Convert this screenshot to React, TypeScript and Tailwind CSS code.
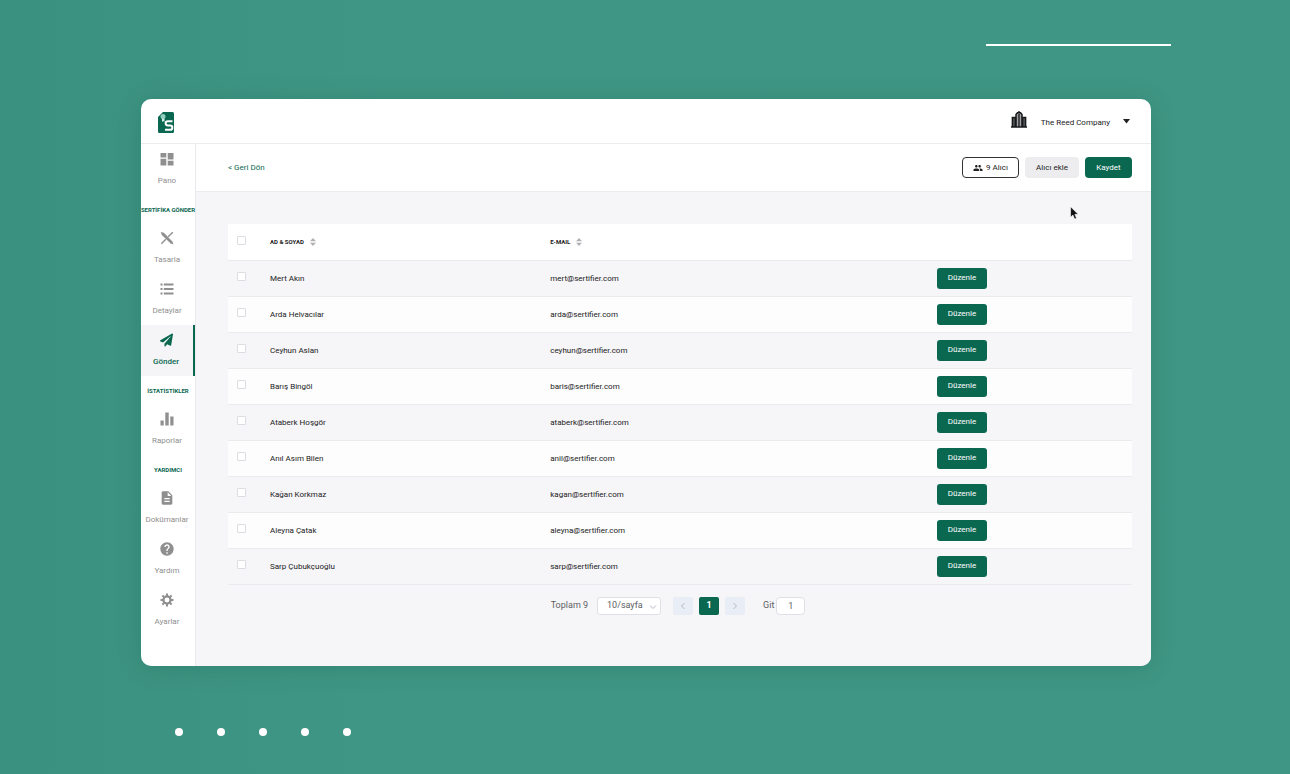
import React from 'react';
import { MdDescription, MdGroup, MdHelp } from 'react-icons/md';
import { FaPaperPlane } from 'react-icons/fa';

interface Recipient {
  name: string;
  email: string;
}

interface NavItemProps {
  label: string;
  icon: React.ReactNode;
  active?: boolean;
}

const recipients: Recipient[] = [
  { name: 'Mert Akın', email: 'mert@sertifier.com' },
  { name: 'Arda Helvacılar', email: 'arda@sertifier.com' },
  { name: 'Ceyhun Aslan', email: 'ceyhun@sertifier.com' },
  { name: 'Barış Bingöl', email: 'baris@sertifier.com' },
  { name: 'Ataberk Hoşgör', email: 'ataberk@sertifier.com' },
  { name: 'Anıl Asım Bilen', email: 'anil@sertifier.com' },
  { name: 'Kağan Korkmaz', email: 'kagan@sertifier.com' },
  { name: 'Aleyna Çatak', email: 'aleyna@sertifier.com' },
  { name: 'Sarp Çubukçuoğlu', email: 'sarp@sertifier.com' },
];

const Logo = () => (
  <svg className="w-4 h-[21px]" viewBox="0 0 16 21" fill="none">
    <path d="M5 0h9.500a1.500 1.500 0 011.500 1.500v18a1.500 1.500 0 01-1.500 1.500h-13a1.500 1.500 0 01-1.500-1.500V5z" fill="#0b6850" />
    <circle cx="5" cy="4.600" r="2.500" fill="#8fd0bf" />
    <path d="M4 6.500v3.500l1.300-1 1.200 1V6.500z" fill="#d5efe8" />
    <path d="M14.500 9.200H9.800a1.900 1.900 0 000 4.300h2.400a2 2 0 010 4.300H7" stroke="#fff" strokeWidth="2" />
  </svg>
);

const DashboardIcon = () => (
  <svg className="w-4 h-4" viewBox="0 0 16 16" fill="currentColor">
    <path d="M1.500 2H7.300v4.500H1.500zM8.700 2h5.800v6.500H8.700zM1.500 7.800h5.800v6.700H1.500zM8.700 9.800h5.800v4.700H8.700z" />
  </svg>
);

const DesignIcon = () => (
  <svg className="w-4 h-4" viewBox="0 0 16 16" fill="none" stroke="currentColor">
    <path d="M2 2l3 .9 8.500 8.900.7 2.400-2.400-.7L2.900 5z" fill="currentColor" strokeWidth=".2" />
    <path d="M13.800 2.200L9.200 6.800M6.800 9.200L2.300 13.700" strokeWidth="1.400" />
  </svg>
);

const ListIcon = () => (
  <svg className="w-4 h-4" viewBox="0 0 16 16" fill="currentColor">
    <path d="M1.500 2.500h2v2h-2zM1.500 7h2v2h-2zM1.500 11.500h2v2h-2zM4.800 2.500h9.700v2H4.800zM4.800 7h9.700v2H4.800zM4.800 11.500h9.700v2H4.800z" />
  </svg>
);

const ChartIcon = () => (
  <svg className="w-4 h-4" viewBox="0 0 16 16" fill="currentColor">
    <path d="M1.500 9.500h3.200v5H1.500zM6.300 1.500h3.400v13H6.300zM11.300 5.500h3.200v9h-3.200z" />
  </svg>
);

const GearIcon = () => (
  <svg className="w-4 h-4" viewBox="0 0 16 16" fill="none" stroke="currentColor">
    <circle cx="8" cy="8" r="3.600" strokeWidth="2.300" />
    <path
      d="M8 1.500v2.500M8 12v2.500M1.500 8H4M12 8h2.500M3.400 3.400l1.800 1.800M10.800 10.800l1.800 1.800M3.400 12.600l1.800-1.800M10.800 5.200l1.800-1.800"
      strokeWidth="2"
    />
  </svg>
);

const BuildingIcon = () => (
  <svg className="w-4 h-[17px]" viewBox="0 0 16 17" fill="none" stroke="#16181a">
    <path d="M5 16V3.500L6.500 1.800h3L11 3.500V16" fill="#a0a3a5" strokeWidth="1.500" />
    <path d="M1.400 16V6.500h3V16M11.600 16V6.500h3V16" fill="#55585a" strokeWidth="1.500" />
    <path d="M8 3v13" strokeWidth="1.300" />
    <path d="M0 16h16M8 0v2" strokeWidth="1.400" />
  </svg>
);

const SortIcon = () => (
  <svg className="w-[6px] h-2" viewBox="0 0 6 8" fill="#b0b0b5">
    <path d="M3 0l3 3.300H0zM3 8L0 4.700h6z" />
  </svg>
);

const Chevron = ({ path }: { path: string }) => (
  <svg className="w-2 h-2" viewBox="0 0 8 8" fill="none" stroke="#b3b8c2">
    <path d={path} />
  </svg>
);

const NavItem: React.FC<NavItemProps> = ({ label, icon, active }) => (
  <a
    href="#"
    className={`flex flex-col items-center h-[51px] pt-[7px] gap-2 text-[8px] leading-3 ${
      active ? 'bg-[#f5f5f7] text-[#0b6850] font-medium border-r-2 border-[#0b6850] pr-[2px]' : 'text-[#8f8f8f] pr-[2px]'
    }`}
  >
    {icon}
    <span>{label}</span>
  </a>
);

const NavTitle = ({ children }: { children: React.ReactNode }) => (
  <h2 className="flex items-center justify-center h-7 text-[6px] font-bold text-[#0b6850] whitespace-nowrap">
    {children}
  </h2>
);

const Checkbox = ({ label }: { label: string }) => (
  <input
    type="checkbox"
    aria-label={label}
    className="block appearance-none w-[9px] h-[9px] mb-[3px] rounded-[1px] border border-[#dcdde2] bg-white checked:bg-[#0b6850]"
  />
);

const App: React.FC = () => {
  return (
    <div className="flex flex-col min-h-screen bg-linear-to-r from-[#3b9180] to-[#3f9684] to-30% pl-[141px] pr-[139px] font-[Roboto,sans-serif] text-[#222]">
      <div className="flex justify-end pt-11 pb-[53px] -mr-5">
        <div className="w-[185px] h-[2px] bg-white" />
      </div>

      <div className="relative flex flex-col rounded-[10px] overflow-hidden bg-white shadow-[0_2px_24px_rgba(0,60,45,0.18)]">
        <header className="flex items-center justify-between h-[45px] pt-[2px] pl-[17px] pr-[21px] border-b border-[#ececf0]">
          <Logo />
          <button className="flex items-center pt-[2px] text-[8px]">
            <span className="pb-2"><BuildingIcon /></span>
            <span className="ml-[14px] mr-[13px]">The Reed Company</span>
            <svg className="w-[7px] h-[5px] mb-[3px]" viewBox="0 0 7 5" fill="#222">
              <path d="M0 0h7L3.500 4.500z" />
            </svg>
          </button>
        </header>

        <div className="flex">
          <nav className="w-[55px] shrink-0 border-r border-[#ebebef] pb-[30px]">
            <NavItem label="Pano" icon={<DashboardIcon />} />
            <NavTitle>SERTİFİKA GÖNDER</NavTitle>
            <NavItem label="Tasarla" icon={<DesignIcon />} />
            <NavItem label="Detaylar" icon={<ListIcon />} />
            <NavItem label="Gönder" icon={<FaPaperPlane className="w-[13px] h-4" />} active />
            <NavTitle>İSTATİSTİKLER</NavTitle>
            <NavItem label="Raporlar" icon={<ChartIcon />} />
            <NavTitle>YARDIMCI</NavTitle>
            <NavItem label="Dokümanlar" icon={<MdDescription className="w-4 h-4" />} />
            <NavItem label="Yardım" icon={<MdHelp className="w-4 h-4" />} />
            <NavItem label="Ayarlar" icon={<GearIcon />} />
          </nav>

          <div className="flex-1 bg-[#f6f5f8]">
            <div className="flex items-center justify-between h-12 pl-8 pr-[19px] bg-white border-b border-[#ececf0]">
              <a href="#" className="text-[8px] text-[#0b6850]">&lt; Geri Dön</a>
              <div className="flex gap-[6px] text-[8px]">
                <button className="flex items-center justify-center gap-[3px] w-[57px] h-[21px] rounded border border-[#333]">
                  <MdGroup className="w-[10px] h-[10px]" />
                  9 Alıcı
                </button>
                <button className="w-[54px] h-[21px] rounded bg-[#ededef]">Alıcı ekle</button>
                <button className="w-[47px] h-[21px] rounded bg-[#0b6850] text-white">Kaydet</button>
              </div>
            </div>

            <main className="pl-8 pr-[19px] pt-8">
              <table className="w-full table-fixed text-left text-[8px]">
                <thead>
                  <tr className="h-9 bg-white border-b border-[#e9e9ee] text-[6px]">
                    <th className="w-[42px] pl-[9px]"><Checkbox label="Tümünü seç" /></th>
                    <th className="w-[31%] font-bold">
                      <span className="flex items-center gap-[6px]">AD &amp; SOYAD <SortIcon /></span>
                    </th>
                    <th className="font-bold">
                      <span className="flex items-center gap-[6px]">E-MAIL <SortIcon /></span>
                    </th>
                    <th className="w-[195px]" />
                  </tr>
                </thead>
                <tbody>
                  {recipients.map((recipient) => (
                    <tr key={recipient.email} className="h-9 border-b border-[#ebebef] even:bg-[#fdfdfe]">
                      <td className="pl-[9px]"><Checkbox label={recipient.name} /></td>
                      <td className="pt-[2px]">{recipient.name}</td>
                      <td className="pt-[2px]">{recipient.email}</td>
                      <td>
                        <button className="block w-[50px] h-[21px] rounded-[3px] bg-[#0b6850] text-white">
                          Düzenle
                        </button>
                      </td>
                    </tr>
                  ))}
                </tbody>
              </table>

              <div className="flex items-center justify-center mt-3 pr-1 text-[9px] text-[#5c5e63]">
                <span>Toplam 9</span>
                <div className="relative ml-[9px] mr-3">
                  <select aria-label="Sayfa boyutu" className="block appearance-none w-16 h-[18px] pl-[9px] rounded-[3px] border border-[#dfe0e6] bg-white">
                    <option>10/sayfa</option>
                  </select>
                  <span className="absolute right-1 top-[6px] pointer-events-none"><Chevron path="M1 2.500l3 3 3-3" /></span>
                </div>
                <div className="flex gap-[6px]">
                  <button aria-label="Önceki" className="flex items-center justify-center w-5 h-[18px] rounded-[2px] bg-[#e9edf6]">
                    <Chevron path="M5.500 1l-3 3 3 3" />
                  </button>
                  <button className="w-5 h-[18px] rounded-[2px] bg-[#0b6850] text-white font-bold">1</button>
                  <button aria-label="Sonraki" className="flex items-center justify-center w-5 h-[18px] rounded-[2px] bg-[#e9edf6]">
                    <Chevron path="M2.500 1l3 3-3 3" />
                  </button>
                </div>
                <label htmlFor="page" className="ml-[18px] mr-[2px]">Git</label>
                <input id="page" defaultValue="1" className="w-[29px] h-[18px] rounded-[4px] border border-[#dfe0e6] bg-white text-center" />
              </div>
            </main>
          </div>
        </div>

        {/* mouse pointer */}
        <svg className="absolute right-[72px] top-[107px] w-[9px] h-[14px]" viewBox="0 0 8 12">
          <path d="M.5.500v9.300l2.100-2 1.500 3.600 1.700-.7-1.500-3.500h3z" fill="#111" stroke="#fff" strokeWidth=".5" />
        </svg>
      </div>

      <div className="flex gap-[34px] pl-[34px] pt-[62px] pb-[38px]">
        {[0, 1, 2, 3, 4].map((dot) => (
          <span key={dot} className="w-2 h-2 rounded-full bg-white" />
        ))}
      </div>
    </div>
  );
};

export default App;
